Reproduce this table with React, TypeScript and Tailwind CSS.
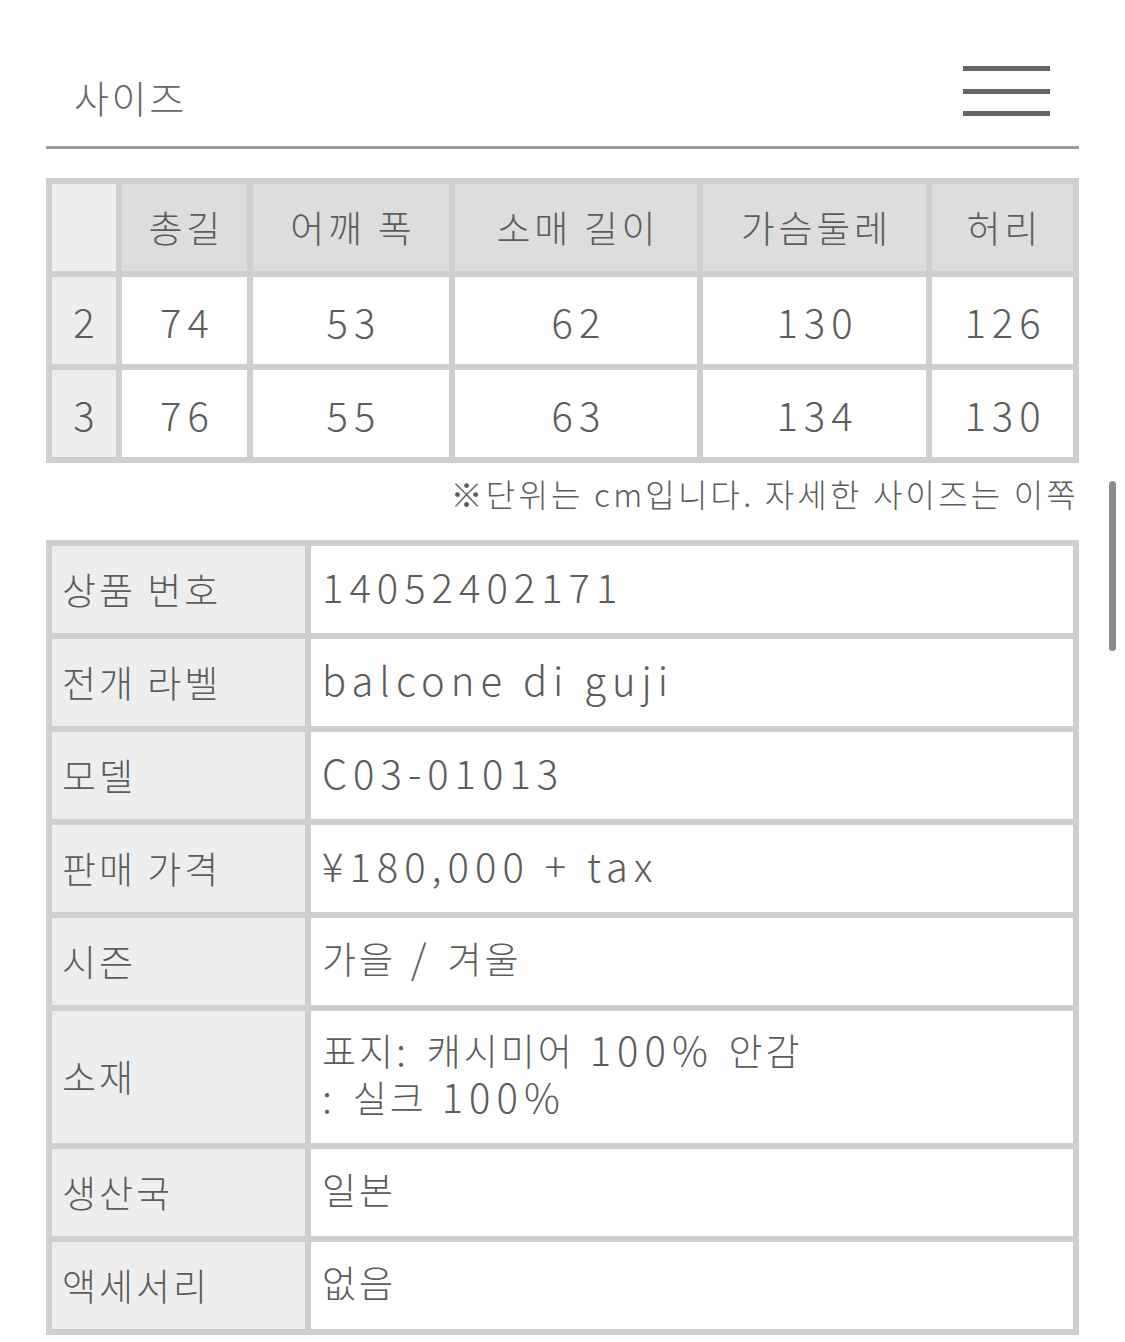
import React from "react";

const font = { fontFamily: '"Noto Sans CJK KR", "Noto Sans", sans-serif' };

const sizeHeaders = ["총길", "어깨 폭", "소매 길이", "가슴둘레", "허리"];
const sizeRows = [
  { size: "2", values: ["74", "53", "62", "130", "126"] },
  { size: "3", values: ["76", "55", "63", "134", "130"] },
];

const details: { label: string; value: string[]; tall?: boolean }[] = [
  { label: "상품 번호", value: ["14052402171"] },
  { label: "전개 라벨", value: ["balcone di guji"] },
  { label: "모델", value: ["C03-01013"] },
  { label: "판매 가격", value: ["¥180,000 + tax"] },
  { label: "시즌", value: ["가을 / 겨울"] },
  { label: "소재", value: ["표지: 캐시미어 100% 안감", ": 실크 100%"], tall: true },
  { label: "생산국", value: ["일본"] },
  { label: "액세서리", value: ["없음"] },
];

// Hangul runs stay at the base size, latin / digits get the larger, spaced-out size
function Mixed({ text }: { text: string }) {
  const parts = text.split(/([\uAC00-\uD7A3]+)/).filter((p) => p !== "");
  return (
    <>
      {parts.map((p, i) =>
        /[\uAC00-\uD7A3]/.test(p) ? (
          <span key={i} className="text-[37px] leading-[46px] tracking-[0.08em]">
            {p}
          </span>
        ) : (
          <span key={i} className="text-[40px] leading-[46px] tracking-[0.15em]">
            {p}
          </span>
        )
      )}
    </>
  );
}

export default function App() {
  return (
    <div className="relative w-[1125px] min-h-[1342px] bg-white font-light text-[#5c5c5c]" style={font}>
      <div className="px-[46px]">
        {/* Header */}
        <div className="flex h-[149px] items-start justify-between border-b-[3px] border-[#9a9a9a]">
          <h1 className="ml-[28px] mt-[72px] text-[38px] font-light leading-[50px] tracking-[0.07em] text-[#666]">
            사이즈
          </h1>
          <div className="mr-[29px] mt-[66px] flex w-[87px] flex-col gap-[17.5px]">
            <span className="h-[5px] bg-[#666]" />
            <span className="h-[5px] bg-[#666]" />
            <span className="h-[5px] bg-[#666]" />
          </div>
        </div>

        {/* Size table */}
        <div className="mt-[29px] grid grid-cols-[64px_125px_196px_242px_223px_141px] gap-[6px] bg-[#cfcfcf] p-[6px]">
          <div className="h-[87px] bg-[#eeeeee]" />
          {sizeHeaders.map((h) => (
            <div
              key={h}
              className="flex h-[87px] items-center justify-center bg-[#dddddd] pl-[0.1em] text-[37px] tracking-[0.1em]"
            >
              {h}
            </div>
          ))}
          {sizeRows.map((row) => (
            <React.Fragment key={row.size}>
              <div className="flex h-[87px] items-center justify-center bg-[#eeeeee] text-[40px]">
                {row.size}
              </div>
              {row.values.map((v, i) => (
                <div
                  key={i}
                  className="flex h-[87px] items-center justify-center bg-white pl-[0.15em] text-[40px] tracking-[0.15em]"
                >
                  {v}
                </div>
              ))}
            </React.Fragment>
          ))}
        </div>

        <p className="mb-[27px] mt-[10px] text-right text-[32px] leading-[40px] tracking-[0.1em]">
          ※단위는 cm입니다. 자세한 사이즈는 이쪽
        </p>

        {/* Product details */}
        <div className="grid grid-cols-[253px_1fr] gap-[6px] bg-[#cfcfcf] p-[6px]">
          {details.map((d) => (
            <React.Fragment key={d.label}>
              <div
                className={`flex items-center bg-[#eeeeee] pl-[10px] text-[37px] tracking-[0.08em] ${
                  d.tall ? "h-[132px]" : "h-[87px]"
                }`}
              >
                {d.label}
              </div>
              <div
                className={`flex flex-col justify-center bg-white pb-[8px] pl-[11px] text-[40px] leading-[46px] ${
                  d.tall ? "h-[132px]" : "h-[87px]"
                }`}
              >
                {d.value.map((line, i) => (
                  <div key={i}>
                    <Mixed text={line} />
                  </div>
                ))}
              </div>
            </React.Fragment>
          ))}
        </div>
      </div>

      {/* scroll indicator */}
      <div className="absolute right-[9px] top-[481px] h-[170px] w-[7px] rounded-full bg-[#8c8c8c]" />
    </div>
  );
}
